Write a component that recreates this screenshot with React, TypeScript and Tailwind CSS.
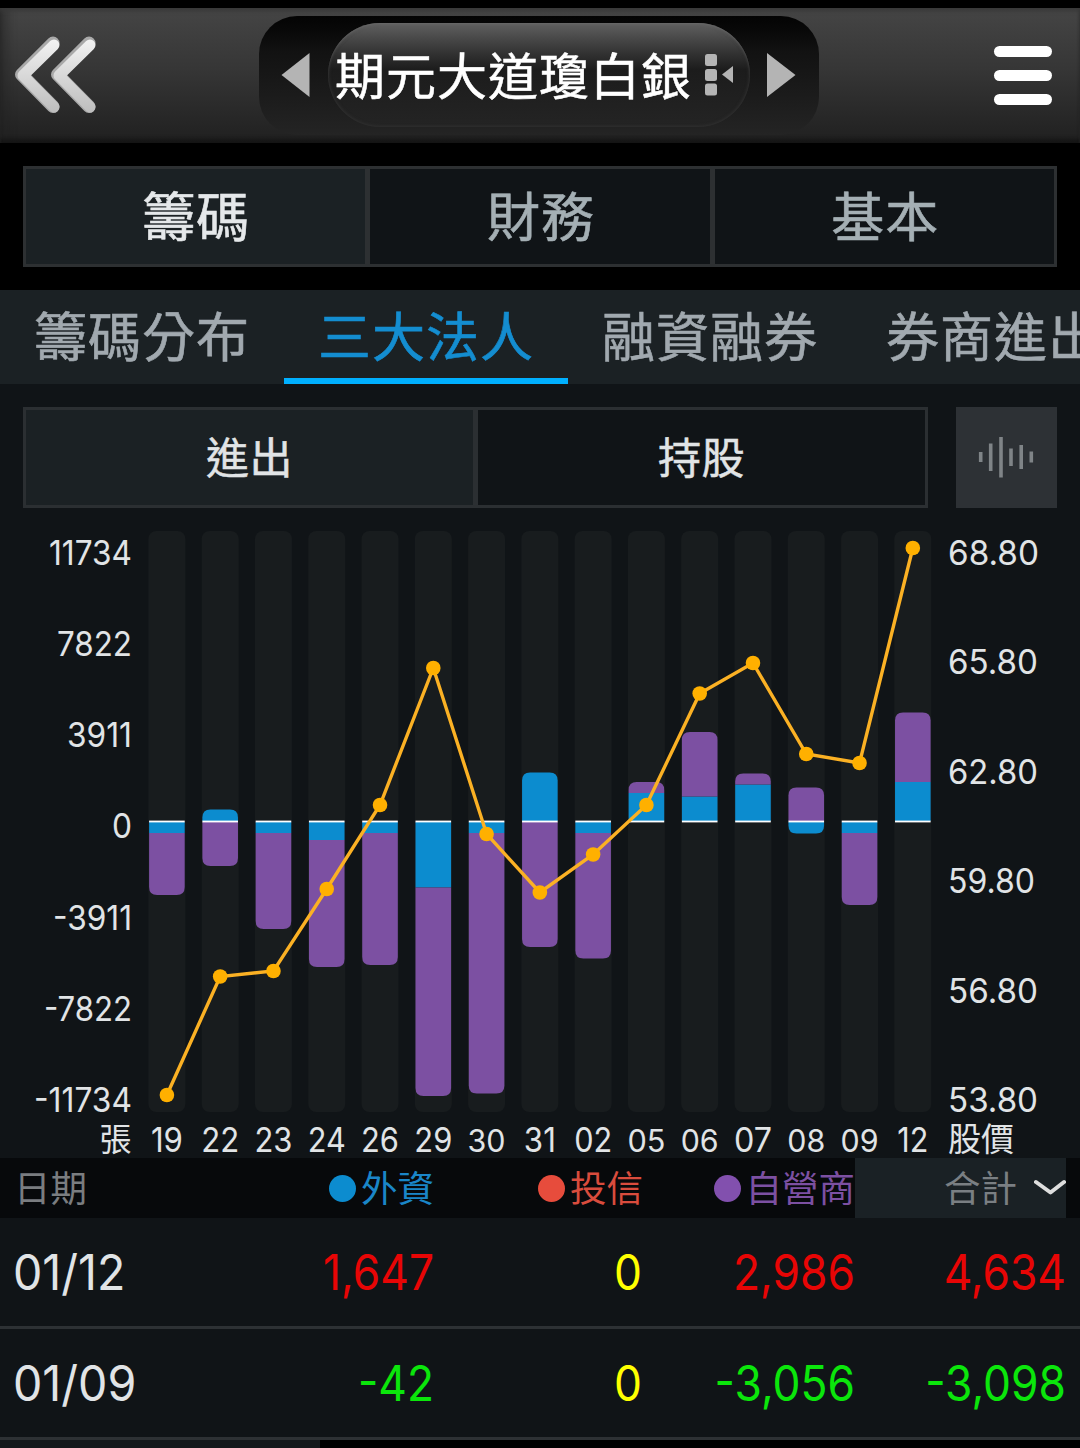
import React from 'react';

const CJK = "font-['Noto_Sans_CJK_TC',sans-serif]";

type Col = { day: string; small?: boolean; blue: [number, number]; purple: [number, number]; price: number };

const cols: Col[] = [
  { day: '19', blue: [822, 833], purple: [833, 895], price: 1095 },
  { day: '22', blue: [809.5, 821], purple: [822, 866], price: 976.5 },
  { day: '23', blue: [822, 833], purple: [833, 929], price: 971 },
  { day: '24', blue: [822, 840], purple: [840, 967], price: 889 },
  { day: '26', blue: [822, 833], purple: [833, 965], price: 805 },
  { day: '29', blue: [822, 887.5], purple: [887.5, 1096], price: 668 },
  { day: '30', small: true, blue: [822, 833], purple: [833, 1093.5], price: 834 },
  { day: '31', blue: [772.5, 821], purple: [822, 947], price: 892.5 },
  { day: '02', blue: [822, 833], purple: [833, 958.5], price: 854.5 },
  { day: '05', small: true, blue: [793, 821], purple: [782, 793], price: 805 },
  { day: '06', small: true, blue: [796.5, 821], purple: [732, 796.5], price: 693.5 },
  { day: '07', blue: [784.5, 821], purple: [773.5, 784.5], price: 663 },
  { day: '08', small: true, blue: [822, 833.5], purple: [787.5, 821], price: 754 },
  { day: '09', small: true, blue: [822, 833], purple: [833, 905], price: 763 },
  { day: '12', blue: [782, 821], purple: [712.5, 782], price: 548 },
];

const dayWidth: Record<string, number> = { '19': 32, '31': 32, '12': 31 };
const cx = (i: number) => 166.9 + i * 53.28;

const leftAxis: [string, number, number][] = [
  ['11734', 565, 83],
  ['7822', 656, 75],
  ['3911', 747, 65],
  ['0', 838, 20],
  ['-3911', 930, 79],
  ['-7822', 1021, 88],
  ['-11734', 1112, 98],
];
const rightAxis: [string, number, number][] = [
  ['68.80', 565, 91],
  ['65.80', 674, 90],
  ['62.80', 784, 90],
  ['59.80', 893, 87],
  ['56.80', 1003, 90],
  ['53.80', 1112, 90],
];

function barPath(x: number, top: number, bottom: number, roundTop: boolean, roundBottom: boolean) {
  const w = 35.6;
  const a = roundTop ? 8 : 0;
  const b = roundBottom ? 8 : 0;
  return `M${x} ${top + a}q0 ${-a} ${a} ${-a}h${w - 2 * a}q${a} 0 ${a} ${a}V${bottom - b}q0 ${b} ${-b} ${b}h${-(w - 2 * b)}q${-b} 0 ${-b} ${-b}z`;
}

function Segment({ x, range, other, color }: { x: number; range: [number, number]; other: [number, number]; color: string }) {
  const up = range[1] <= 821;
  const roundTop = up && !(other[1] <= 821 && other[0] < range[0]);
  const roundBottom = !up && !(other[0] >= 822 && other[1] > range[1]);
  return <path d={barPath(x, range[0], range[1], roundTop, roundBottom)} fill={color} />;
}

function Chart() {
  return (
    <svg className="block h-[650px] w-full overflow-visible [font-feature-settings:'case']" viewBox="0 508 1080 650" fontFamily="Inter, 'Noto Sans CJK TC', sans-serif">
      {cols.map((c, i) => (
        <rect key={c.day} x={cx(i) - 18.5} y={531} width={37} height={581} rx={8} fill="#181c1e" />
      ))}
      {cols.map((c, i) => {
        const x = cx(i) - 17.8;
        return (
          <g key={c.day}>
            <Segment x={x} range={c.blue} other={c.purple} color="#0c8ccf" />
            <Segment x={x} range={c.purple} other={c.blue} color="#7c50a2" />
            <rect x={x} y={820.6} width={35.6} height={1.8} fill="#fff" />
          </g>
        );
      })}
      <polyline points={cols.map((c, i) => `${cx(i)},${c.price}`).join(' ')} fill="none" stroke="#fbb124" strokeWidth={3.4} />
      {cols.map((c, i) => (
        <circle key={c.day} cx={cx(i)} cy={c.price} r={7.3} fill="#ffb000" />
      ))}
      <g fill="#e1e4e6" fontSize={34.5}>
        {leftAxis.map(([t, y, w]) => (
          <text key={t} x={132 - w} y={y} textLength={w} lengthAdjust="spacingAndGlyphs">{t}</text>
        ))}
        {rightAxis.map(([t, y, w]) => (
          <text key={t} x={948} y={y} textLength={w} lengthAdjust="spacingAndGlyphs">{t}</text>
        ))}
        {cols.map((c, i) => {
          const w = dayWidth[c.day] ?? 38;
          return (
            <text key={c.day} x={cx(i) - w / 2} y={1152} fontSize={c.small ? 31 : 34} textLength={w} lengthAdjust="spacingAndGlyphs">{c.day}</text>
          );
        })}
        <text x={99.5} y={1151} fontSize={32} fontFamily="'Noto Sans CJK TC', sans-serif">張</text>
        <text x={948} y={1151} fontSize={33} fontFamily="'Noto Sans CJK TC', sans-serif">股價</text>
      </g>
    </svg>
  );
}

function Header() {
  return (
    <header className="mt-2 flex h-[135px] items-center justify-between bg-linear-to-b from-[#454545] via-[#363636] via-45% to-[#202020] pb-px shadow-[inset_0_5px_4px_-2px_#383838,inset_0_-5px_4px_-1px_#151515,inset_14px_0_8px_-6px_#2227]">
      <svg className="h-[135px] w-[259px]" viewBox="0 8 259 135" fill="none" strokeLinecap="round" strokeLinejoin="round">
        <defs>
          <linearGradient id="back" x1="0" y1="36" x2="0" y2="113" gradientUnits="userSpaceOnUse">
            <stop offset="0" stopColor="#f5f5f5" />
            <stop offset="1" stopColor="#bdbdbd" />
          </linearGradient>
        </defs>
        <path d="M53 43L21.500 74.500L53 106.500M89 43L57.500 74.500L89 106.500" stroke="#a9a9a9" strokeWidth="13" />
        <path d="M54 45L23 75.500L54 107M90 45L59 75.500L90 107" stroke="url(#back)" strokeWidth="11" />
      </svg>
      <div className="flex h-[119px] w-[560px] items-center justify-between rounded-[38px] bg-linear-to-b from-[#040404] via-[#121212] via-30% to-[#242424] px-[22px]">
        <svg className="h-[46px] w-[30px]" viewBox="0 0 30 46"><path d="M0.500 23L28.500 1V45Z" fill="#b4b4b4" /></svg>
        <div className="flex h-[104px] w-[422px] shrink-0 items-center rounded-full bg-linear-to-b from-[#606060] via-[#1c1c1c] via-45% to-[#242424] pl-[7px] shadow-[inset_0_4px_3px_-2px_#6b6b6b,inset_0_0_3px_1px_#303030]">
          <span className={`${CJK} relative -top-[2px] w-[363px] text-[50px] leading-none font-normal tracking-[1px] whitespace-nowrap text-white [-webkit-text-stroke:0.5px_white]`}>期元大道瓊白銀</span>
          <svg className="h-[42px] w-[30px] shrink-0" viewBox="0 0 30 42" fill="#b4b4b4">
            <rect x="7" y="0" width="12" height="12" rx="2.5" />
            <rect x="7" y="15" width="12" height="12" rx="2.5" />
            <rect x="7" y="29.500" width="12" height="12" rx="2.5" />
          </svg>
          <svg className="-ml-[6px] h-[18px] w-[11px] shrink-0" viewBox="0 0 11 18"><path d="M0 8.500L11 0V17Z" fill="#b4b4b4" /></svg>
        </div>
        <svg className="h-[46px] w-[30px]" viewBox="0 0 30 46"><path d="M28.500 23L0 1V45Z" fill="#b4b4b4" /></svg>
      </div>
      <div className="flex w-[261px] flex-col items-end gap-[13px] pr-[28px]">
        <i className="block h-[11px] w-[58px] rounded-full bg-white" />
        <i className="block h-[11px] w-[58px] rounded-full bg-white" />
        <i className="block h-[11px] w-[58px] rounded-full bg-white" />
      </div>
    </header>
  );
}

function Num({ children, className }: { children: React.ReactNode; className: string }) {
  return (
    <span className={`whitespace-nowrap font-['Inter'] text-[49px] leading-none [font-feature-settings:'case'] ${className}`}>
      {children}
    </span>
  );
}

function Row({ date, values, colors }: { date: string; values: string[]; colors: string[] }) {
  return (
    <div className="grid h-[111px] grid-cols-[223px_211px_208px_213px_211px] items-center border-b-3 border-[#2d3134]">
      <Num className="ml-[13px] origin-left scale-x-[0.95] text-[#e1e4e6]">{date}</Num>
      {values.map((v, i) => (
        <Num key={i} className={`origin-right scale-x-[0.905] text-right ${colors[i]}`}>{v}</Num>
      ))}
    </div>
  );
}

export default function App() {
  return (
    <div className="flex h-[1448px] w-[1080px] flex-col overflow-hidden bg-black">
      <Header />
      <nav className={`${CJK} mx-[23px] mt-[23px] grid h-[101px] shrink-0 grid-cols-3 gap-[5px] border-3 border-[#2d3032] bg-[#2d3032] text-[53px] leading-none font-normal tracking-[1px] text-[#a4afb4] [-webkit-text-stroke:0.6px_currentColor]`}>
        <div className="flex items-center justify-center bg-[#1b2124] pb-[5px] pl-px text-[#e5e8ea]">籌碼</div>
        <div className="flex items-center justify-center bg-[#101417] pb-[5px] pl-[2px]">財務</div>
        <div className="flex items-center justify-center bg-[#101417] pb-[5px] pl-[2px]">基本</div>
      </nav>
      <nav className={`${CJK} mt-[23px] flex h-[94px] shrink-0 bg-[#1b2124] text-[53px] leading-[88px] font-normal tracking-[1px] whitespace-nowrap text-[#a1a9af] [-webkit-text-stroke:0.6px_currentColor]`}>
        <div className="w-[284px] shrink-0 pl-[34px]">籌碼分布</div>
        <div className="w-[284px] shrink-0 border-b-6 border-[#00b0ff] pl-[34px] text-[#148dd0]">三大法人</div>
        <div className="w-[284px] shrink-0 pl-[34px]">融資融券</div>
        <div className="w-[284px] shrink-0 pl-[34px]">券商進出</div>
      </nav>
      <main className="shrink-0 bg-[#101417]">
        <div className="flex h-[124px] justify-between px-[23px] pt-[23px]">
          <div className={`${CJK} grid w-[905px] grid-cols-2 gap-[5px] border-3 border-[#2b2f32] bg-[#2b2f32] text-[43px] leading-none font-normal tracking-[0.5px] text-[#e1e4e6] [-webkit-text-stroke:0.5px_currentColor]`}>
            <div className="flex items-center justify-center bg-[#1b2124] pb-[5px]">進出</div>
            <div className="flex items-center justify-center bg-[#101417] pb-[5px]">持股</div>
          </div>
          <svg className="h-[101px] w-[101px] bg-[#2d3135]" viewBox="0 0 101 101" stroke="#7f8487" strokeWidth="3.6">
            <path d="M24.700 45V55M34.700 36.500V64M45 30V70.500M55 41.500V59M65.200 38V62M75.300 44.500V55.500" />
          </svg>
        </div>
        <Chart />
        <div className={`${CJK} grid h-[60px] grid-cols-[223px_211px_208px_213px_211px] bg-[#07090b] text-[36.5px] leading-[57px] whitespace-nowrap`}>
          <div className="pl-[14px] text-[#7a7d80]">日期</div>
          <div className="flex items-center justify-end gap-[5px] text-[#1a86c8]"><i className="size-[27px] rounded-full bg-[#0c8ccf]" /><span className="h-[60px]">外資</span></div>
          <div className="-mr-px flex items-center justify-end gap-[5px] text-[#d94c3d]"><i className="size-[27px] rounded-full bg-[#e74c3c]" /><span className="h-[60px]">投信</span></div>
          <div className="flex items-center justify-end gap-[5px] text-[#7c50a2]"><i className="size-[27px] rounded-full bg-[#8250ae]" /><span className="h-[60px]">自營商</span></div>
          <div className="flex items-center justify-end gap-[17px] bg-[#1a2125] text-[#7a7f83]">
            <span className="h-[60px]">合計</span>
            <svg className="h-[20px] w-[32px]" viewBox="0 0 32 20" fill="none"><path d="M2 4L16.500 14.500L30 4" stroke="#dedede" strokeWidth="4" strokeLinecap="round" strokeLinejoin="round" /></svg>
          </div>
        </div>
        <Row date="01/12" values={['1,647', '0', '2,986', '4,634']} colors={['text-[#e80505]', 'text-[#ffff00]', 'text-[#e80505]', 'text-[#e80505]']} />
        <Row date="01/09" values={['-42', '0', '-3,056', '-3,098']} colors={['text-[#0be60b]', 'text-[#ffff00]', 'text-[#0be60b]', 'text-[#0be60b]']} />
      </main>
      <div className="h-2 w-80 bg-[#14181b]" />
    </div>
  );
}
